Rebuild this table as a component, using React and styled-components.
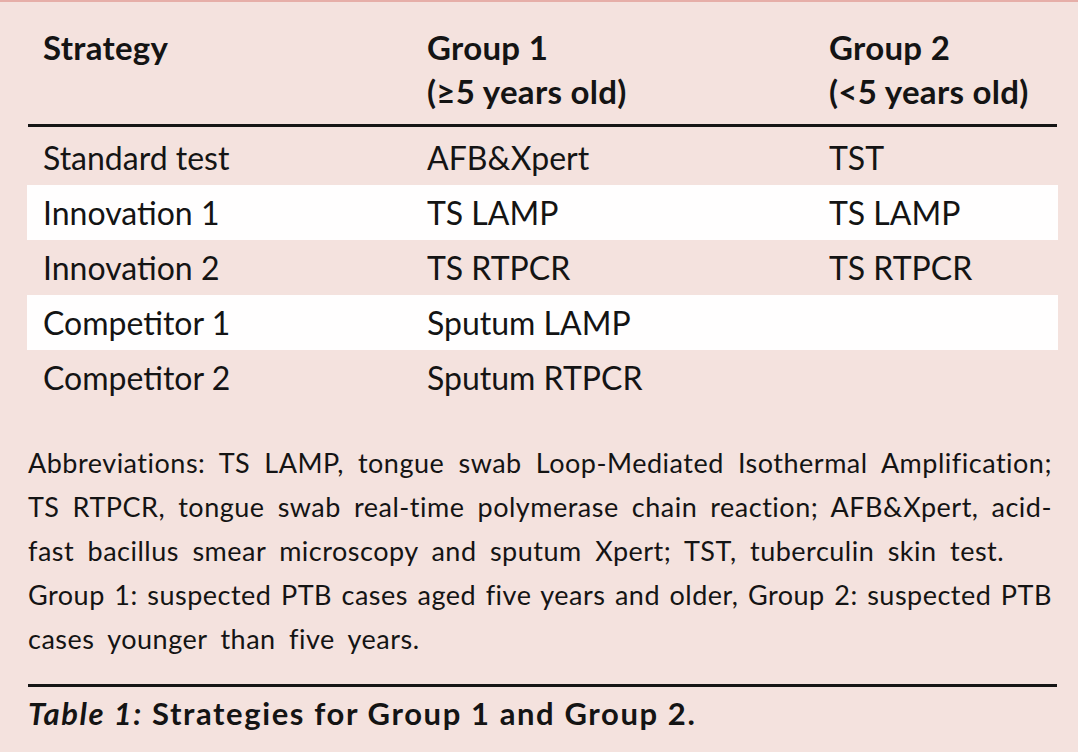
import styled, { createGlobalStyle } from "styled-components"

const GlobalStyle = createGlobalStyle`
  html, body {
    margin: 0;
    padding: 0;
    background: #f4e2de;
  }
  body {
    font-family: Lato, "Noto Sans", sans-serif;
    color: #141414;
  }
`;

const Page = styled.div`
  box-sizing: border-box;
  min-height: 752px;
  border-top: 2px solid #e6aea8;
  padding: 0 20px 0 27px;
`;

const Row = styled.div`
  display: grid;
  grid-template-columns: 384px 402px 1fr;
  padding-left: 16px;
`;

const HeaderRow = styled(Row)`
  margin: 0 1px;
  padding: 23px 0 11px 15px;
  border-bottom: 3px solid #151515;
  font-size: 33px;
  font-weight: 700;
  line-height: 44px;
  letter-spacing: 0.3px;
`;

const Body = styled.div`
  margin-top: 3px;
`;

const DataRow = styled(Row)`
  height: 55px;
  font-size: 32px;
  line-height: 55px;
  background: ${({ $striped }) => ($striped ? "#fffefe" : "transparent")};
`;

const Cell = styled.div`
  white-space: nowrap;
`;

const Notes = styled.div`
  margin: 36px 6px 0 1px;
  font-size: 27px;
  line-height: 44px;
  letter-spacing: 0.5px;
`;

const NoteLine = styled.div`
  white-space: nowrap;
  text-align: justify;
  text-align-last: ${({ $justify }) => ($justify ? "justify" : "left")};
  word-spacing: ${({ $justify }) => ($justify ? "0" : "6px")};
`;

const Title = styled.div`
  margin: 23px 1px 0;
  padding-top: 6px;
  border-top: 3px solid #151515;
  font-size: 31px;
  font-weight: 700;
  line-height: 40px;
  letter-spacing: 1.6px;

  em {
    font-style: italic;
  }
`;

const rows = [
  ["Standard test", "AFB&Xpert", "TST"],
  ["Innovation 1", "TS LAMP", "TS LAMP"],
  ["Innovation 2", "TS RTPCR", "TS RTPCR"],
  ["Competitor 1", "Sputum LAMP", ""],
  ["Competitor 2", "Sputum RTPCR", ""],
];

const notes = [
  ["Abbreviations: TS LAMP, tongue swab Loop-Mediated Isothermal Amplification;", true],
  ["TS RTPCR, tongue swab real-time polymerase chain reaction; AFB&Xpert, acid-", true],
  ["fast bacillus smear microscopy and sputum Xpert; TST, tuberculin skin test.", false],
  ["Group 1: suspected PTB cases aged five years and older, Group 2: suspected PTB", true],
  ["cases younger than five years.", false],
];

const App = () => {
  return (
    <>
      <GlobalStyle />
      <Page>
        <HeaderRow>
          <Cell>Strategy</Cell>
          <Cell>
            Group 1<br />(≥5 years old)
          </Cell>
          <Cell>
            Group 2<br />(&lt;5 years old)
          </Cell>
        </HeaderRow>
        <Body>
          {rows.map((r, i) => (
            <DataRow key={r[0]} $striped={i % 2 === 1}>
              <Cell>{r[0]}</Cell>
              <Cell>{r[1]}</Cell>
              <Cell>{r[2]}</Cell>
            </DataRow>
          ))}
        </Body>
        <Notes>
          {notes.map(([text, justify]) => (
            <NoteLine key={text} $justify={justify}>
              {text}
            </NoteLine>
          ))}
        </Notes>
        <Title>
          <em>Table 1:</em> Strategies for Group 1 and Group 2.
        </Title>
      </Page>
    </>
  )
}

export default App
